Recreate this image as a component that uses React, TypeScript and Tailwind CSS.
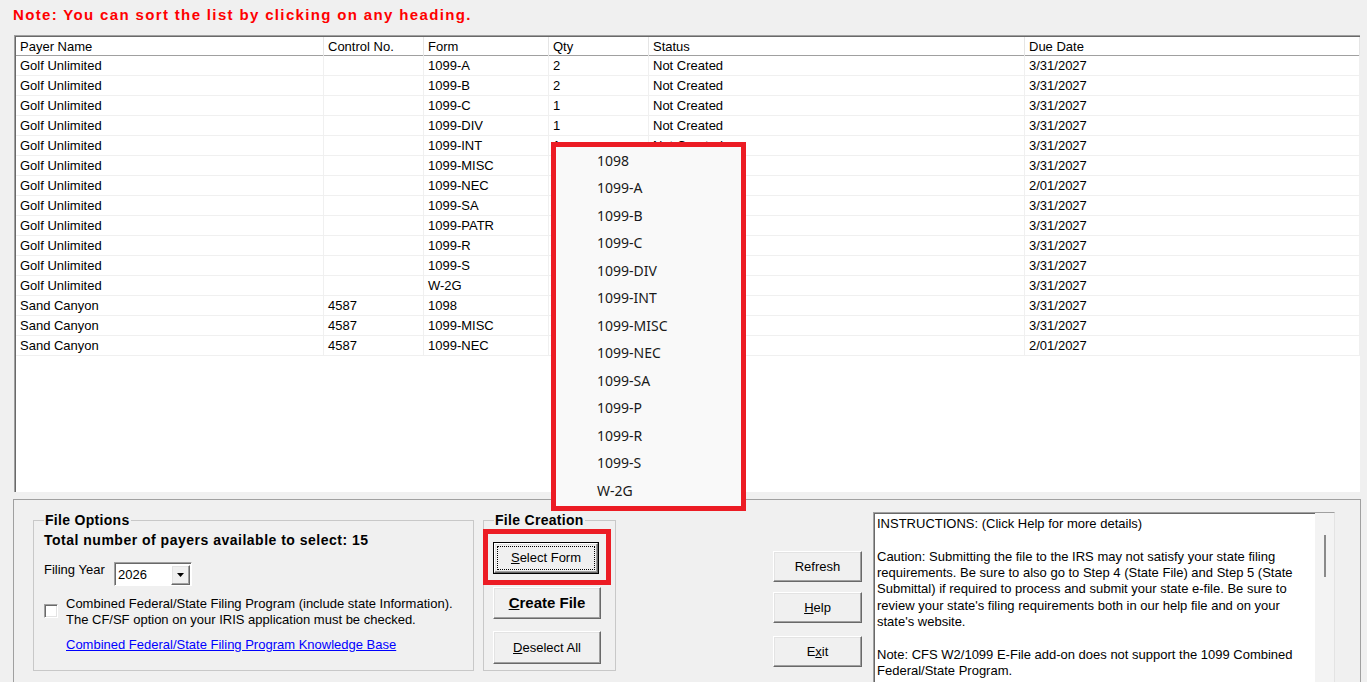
import React from "react";

// Qty and Status of rows 6-15 sit fully behind the open dropdown menu in the picture.
const rows: string[][] = [
  ["Golf Unlimited", "", "1099-A", "2", "Not Created", "3/31/2027"],
  ["Golf Unlimited", "", "1099-B", "2", "Not Created", "3/31/2027"],
  ["Golf Unlimited", "", "1099-C", "1", "Not Created", "3/31/2027"],
  ["Golf Unlimited", "", "1099-DIV", "1", "Not Created", "3/31/2027"],
  ["Golf Unlimited", "", "1099-INT", "1", "Not Created", "3/31/2027"],
  ["Golf Unlimited", "", "1099-MISC", "", "", "3/31/2027"],
  ["Golf Unlimited", "", "1099-NEC", "", "", "2/01/2027"],
  ["Golf Unlimited", "", "1099-SA", "", "", "3/31/2027"],
  ["Golf Unlimited", "", "1099-PATR", "", "", "3/31/2027"],
  ["Golf Unlimited", "", "1099-R", "", "", "3/31/2027"],
  ["Golf Unlimited", "", "1099-S", "", "", "3/31/2027"],
  ["Golf Unlimited", "", "W-2G", "", "", "3/31/2027"],
  ["Sand Canyon", "4587", "1098", "", "", "3/31/2027"],
  ["Sand Canyon", "4587", "1099-MISC", "", "", "3/31/2027"],
  ["Sand Canyon", "4587", "1099-NEC", "", "", "2/01/2027"],
];

const headers = ["Payer Name", "Control No.", "Form", "Qty", "Status", "Due Date"];

const menuItems = [
  "1098",
  "1099-A",
  "1099-B",
  "1099-C",
  "1099-DIV",
  "1099-INT",
  "1099-MISC",
  "1099-NEC",
  "1099-SA",
  "1099-P",
  "1099-R",
  "1099-S",
  "W-2G",
];

const instructions = [
  "INSTRUCTIONS: (Click Help for more details)",
  "",
  "Caution: Submitting the file to the IRS may not satisfy your state filing",
  "requirements. Be sure to also go to Step 4 (State File) and Step 5 (State",
  "Submittal) if required to process and submit your state e-file. Be sure to",
  "review your state's filing requirements both in our help file and on your",
  "state's website.",
  "",
  "Note: CFS W2/1099 E-File add-on does not support the 1099 Combined",
  "Federal/State Program.",
];

const btn3d =
  "bg-[#f0f0f0] border border-t-white border-l-white border-r-[#696969] border-b-[#696969] shadow-[inset_-1px_-1px_0_#a0a0a0,inset_1px_1px_0_#e3e3e3] flex items-center justify-center";

function Btn({ children, className }: { children: React.ReactNode; className: string }) {
  return <div className={`${btn3d} ${className}`}>{children}</div>;
}

export default function App() {
  return (
    <div className="relative w-[1367px] h-[682px] overflow-hidden bg-[#f0f0f0] font-['Liberation_Sans',Arial,sans-serif] text-[13px] text-black">
      {/* Note */}
      <div className="h-[35px] pl-[13px] pt-[6px] text-[#ff0000] font-bold text-[15px] leading-[18px] tracking-[1.35px] whitespace-nowrap">
        Note: You can sort the list by clicking on any heading.
      </div>

      {/* List */}
      <div className="ml-[14px] w-[1346px] h-[457px] bg-white border-t border-l border-[#a0a0a0] shadow-[inset_1px_1px_0_#696969] pl-[1px] pt-[1px] flex flex-col">
        <div className="grid grid-cols-[308px_100px_125px_100px_376px_1fr] h-[19px] border-b border-[#a0a0a0] bg-white">
          {headers.map((h) => (
            <div key={h} className="leading-[19px] whitespace-nowrap border-r border-[#e5e5e5] pl-[4px]">
              {h}
            </div>
          ))}
        </div>
        {rows.map((r, ri) => (
          <div
            key={ri}
            className="grid grid-cols-[308px_100px_125px_100px_376px_1fr] h-[20px] border-b border-[#f0f0f0]"
          >
            {r.map((c, ci) => (
              <div key={ci} className="leading-[20px] whitespace-nowrap border-r border-[#f0f0f0] pl-[4px]">
                {c}
              </div>
            ))}
          </div>
        ))}
      </div>

      {/* Bottom panel */}
      <div className="mt-[7px] ml-[13px] w-[1348px] h-[190px] border-t border-l border-r border-[#a0a0a0] flex items-start">
        {/* File Options */}
        <fieldset className="ml-[19px] mt-[12px] w-[441px] h-[159px] border border-[#c8c8c8] pl-[10px] pr-[6px]">
          <legend className="px-[1px] font-bold text-[14px] leading-[16px] tracking-[0.3px]">File Options</legend>
          <div className="mt-[4px] font-bold text-[14px] leading-[16px] tracking-[0.5px] whitespace-nowrap">
            Total number of payers available to select: 15
          </div>
          <div className="mt-[14px] flex items-start h-[24px]">
            <div className="w-[70px] leading-[16px]">Filing Year</div>
            <div className="w-[78px] h-[24px] bg-white border border-t-[#a0a0a0] border-l-[#a0a0a0] border-r-white border-b-white shadow-[inset_1px_1px_0_#696969] flex items-center pl-[3px] pr-[1px]">
              <span className="flex-1 leading-[16px] pt-[1px]">2026</span>
              <div className={`${btn3d} w-[19px] h-[20px] mt-[1px]`}>
                <svg width="7" height="4" viewBox="0 0 7 4">
                  <path d="M0 0H7L3.5 4Z" fill="#000" />
                </svg>
              </div>
            </div>
          </div>
          <div className="mt-[10px] flex items-start">
            <div className="mt-[8px] w-[14px] h-[14px] bg-white border border-t-[#a0a0a0] border-l-[#a0a0a0] border-r-white border-b-white shadow-[inset_1px_1px_0_#696969,inset_-1px_-1px_0_#e3e3e3]" />
            <div className="ml-[8px] leading-[16px] whitespace-nowrap">
              <div>Combined Federal/State Filing Program (include state Information).</div>
              <div>The CF/SF option on your IRIS application must be checked.</div>
            </div>
          </div>
          <div className="mt-[9px] ml-[22px] leading-[16px] text-[#0000ff] underline whitespace-nowrap">
            Combined Federal/State Filing Program Knowledge Base
          </div>
        </fieldset>

        {/* File Creation */}
        <fieldset className="ml-[9px] mt-[12px] w-[133px] h-[159px] border border-[#c8c8c8] pl-[9px]">
          <legend className="ml-[1px] px-[1px] font-bold text-[14px] leading-[16px] tracking-[0.3px]">File Creation</legend>
          <div className="mt-[14px] w-[106px] h-[32px] border border-black">
            <div className={`${btn3d} w-full h-full p-[2px]`}>
              <div className="w-full h-full border border-dotted border-black flex items-center justify-center">
                <span>
                  <span className="underline">S</span>elect Form
                </span>
              </div>
            </div>
          </div>
          <Btn className="mt-[13px] w-[108px] h-[32px] font-bold text-[15px]">
            <span>
              <span className="underline">C</span>reate File
            </span>
          </Btn>
          <Btn className="mt-[12px] w-[108px] h-[33px]">
            <span>
              <span className="underline">D</span>eselect All
            </span>
          </Btn>
        </fieldset>

        {/* Buttons */}
        <div className="ml-[157px] mt-[51px] w-[89px] flex flex-col">
          <Btn className="h-[31px]">Refresh</Btn>
          <Btn className="mt-[10px] h-[31px]">
            <span>
              <span className="underline">H</span>elp
            </span>
          </Btn>
          <Btn className="mt-[13px] h-[31px]">
            <span>
              E<span className="underline">x</span>it
            </span>
          </Btn>
        </div>

        {/* Instructions */}
        <div className="ml-[11px] mt-[12px] w-[462px] h-[180px] bg-white border-t border-l border-r border-t-[#a0a0a0] border-l-[#a0a0a0] border-r-[#e3e3e3] shadow-[inset_1px_1px_0_#696969] flex">
          <div className="flex-1 pl-[3px] pt-[3px] leading-[16.33px] whitespace-nowrap">
            {instructions.map((l, i) => (
              <div key={i} className="h-[16.33px]">
                {l}
              </div>
            ))}
          </div>
          <div className="w-[19px] bg-[#f3f3f3] flex justify-center pt-[22px]">
            <div className="w-[2px] h-[42px] bg-[#8a8a8a]" />
          </div>
        </div>
      </div>

      {/* Red highlight around Select Form */}
      <div className="absolute left-[483px] top-[529px] w-[128px] h-[56px] border-[5px] border-[#ec1c24]" />

      {/* Dropdown menu */}
      <div className="absolute left-[551px] top-[142px] w-[195px] h-[369px] border-[5px] border-[#ec1c24] bg-[#f9f9f9] font-['Noto_Sans',sans-serif] text-[14px] text-[#1a1a1a] flex flex-col">
        {menuItems.map((m) => (
          <div key={m} className="h-[27.5px] flex items-center pl-[41px] pb-[1px] whitespace-nowrap">
            {m}
          </div>
        ))}
      </div>
    </div>
  );
}
